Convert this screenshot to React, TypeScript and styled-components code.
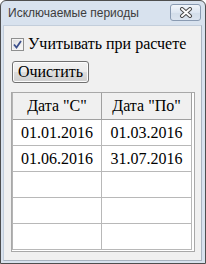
import React, { useState } from 'react';
import styled, { createGlobalStyle } from 'styled-components';

const GlobalStyle = createGlobalStyle`
  html, body {
    margin: 0;
    padding: 0;
    background: #ffffff;
  }
`;

const Window = styled.div`
  box-sizing: border-box;
  width: 206px;
  height: 264px;
  border: 1px solid #4e4e4e;
  border-radius: 6px 6px 0 0;
  background: #d8e2ee;
  padding: 0 3px 2px 2px;
  display: flex;
  flex-direction: column;
`;

const TitleBar = styled.div`
  height: 24px;
  flex: none;
  display: flex;
  align-items: flex-start;
  justify-content: space-between;
  padding-left: 5px;
`;

const Title = styled.div`
  font-family: 'Liberation Sans', Arial, sans-serif;
  font-size: 12px;
  color: #3c3c3c;
  margin-top: 5px;
`;

const CloseButton = styled.div`
  box-sizing: border-box;
  width: 31px;
  height: 17px;
  margin: 3px 1px 0 0;
  border: 1px solid #8a9bb2;
  border-radius: 3px;
  background: linear-gradient(#f2f6fb, #dde6f1 50%, #d2dde9 51%, #dbe4ef);
  display: flex;
  align-items: center;
  justify-content: center;
`;

const Client = styled.div`
  flex: 1;
  box-sizing: border-box;
  background: #f0f0f0;
  border: 1px solid #a9b3c0;
  border-top-color: #c3cedb;
  border-left-color: #c3cedb;
  display: flex;
  flex-direction: column;
  align-items: flex-start;
  font-family: 'Liberation Serif', 'Times New Roman', serif;
  font-size: 16px;
  color: #000;
`;

const CheckRow = styled.label`
  height: 18px;
  margin: 9px 0 0 7px;
  display: flex;
  align-items: center;
  gap: 4px;
  cursor: default;
`;

const CheckBox = styled.span<{ checked: boolean }>`
  box-sizing: border-box;
  width: 13px;
  height: 13px;
  border: 1px solid #8e8f8f;
  background: linear-gradient(135deg, #dcdcdc, #fbfbfb);
  box-shadow: inset 0 0 0 1px #f4f4f4;
  display: flex;
  align-items: center;
  justify-content: center;
`;

const Button = styled.button`
  box-sizing: border-box;
  width: 77px;
  height: 22px;
  margin: 8px 0 0 8px;
  padding: 0;
  border: 1px solid #707070;
  border-radius: 3px;
  background: linear-gradient(#f2f2f2, #ebebeb 50%, #dddddd 51%, #cfcfcf);
  box-shadow: inset 0 0 0 1px #fcfcfc;
  font-family: inherit;
  font-size: 16px;
  color: #000;
  line-height: 18px;
`;

const GridFrame = styled.div`
  box-sizing: border-box;
  width: 184px;
  height: 160px;
  margin: 9px 0 0 7px;
  border: 1px solid #a8a8a8;
  padding: 0 1px 1px 0;
  background: #ffffff;
`;

const Grid = styled.div`
  display: grid;
  grid-template-columns: 89px 90px;
  border-left: 1px solid #b4b4b4;
`;

const HeaderCell = styled.div`
  box-sizing: border-box;
  height: 27px;
  background: #f0f0f0;
  border-right: 1px solid #a0a0a0;
  border-bottom: 1px solid #a0a0a0;
  display: flex;
  align-items: center;
  justify-content: center;
`;

const Cell = styled.div`
  box-sizing: border-box;
  height: 26px;
  background: #ffffff;
  border-right: 1px solid #b8b8b8;
  border-bottom: 1px solid #b8b8b8;
  display: flex;
  align-items: center;
  justify-content: center;
  padding-top: 1px;
`;

const rows = [
  ['01.01.2016', '01.03.2016'],
  ['01.06.2016', '31.07.2016'],
  ['', ''],
  ['', ''],
  ['', ''],
];

export default function App() {
  const [checked, setChecked] = useState(true);

  return (
    <>
      <GlobalStyle />
      <Window>
        <TitleBar>
          <Title>Исключаемые периоды</Title>
          <CloseButton>
            <svg width="14" height="11" viewBox="0 0 14 11">
              <path d="M3 2 L11 9 M11 2 L3 9" stroke="#4a4a4a" strokeWidth="4" strokeLinecap="round" />
              <path d="M3 2 L11 9 M11 2 L3 9" stroke="#ffffff" strokeWidth="2" strokeLinecap="round" />
            </svg>
          </CloseButton>
        </TitleBar>
        <Client>
          <CheckRow onClick={() => setChecked(!checked)}>
            <CheckBox checked={checked}>
              {checked && (
                <svg width="9" height="9" viewBox="0 0 9 9">
                  <path d="M1 4.5 L3.5 7.5 L8 1" fill="none" stroke="#3b4f8c" strokeWidth="1.8" />
                </svg>
              )}
            </CheckBox>
            <span>Учитывать при расчете</span>
          </CheckRow>
          <Button>Очистить</Button>
          <GridFrame>
            <Grid>
              <HeaderCell>Дата "С"</HeaderCell>
              <HeaderCell>Дата "По"</HeaderCell>
              {rows.map((r, i) => (
                <React.Fragment key={i}>
                  <Cell>{r[0]}</Cell>
                  <Cell>{r[1]}</Cell>
                </React.Fragment>
              ))}
            </Grid>
          </GridFrame>
        </Client>
      </Window>
    </>
  );
}
